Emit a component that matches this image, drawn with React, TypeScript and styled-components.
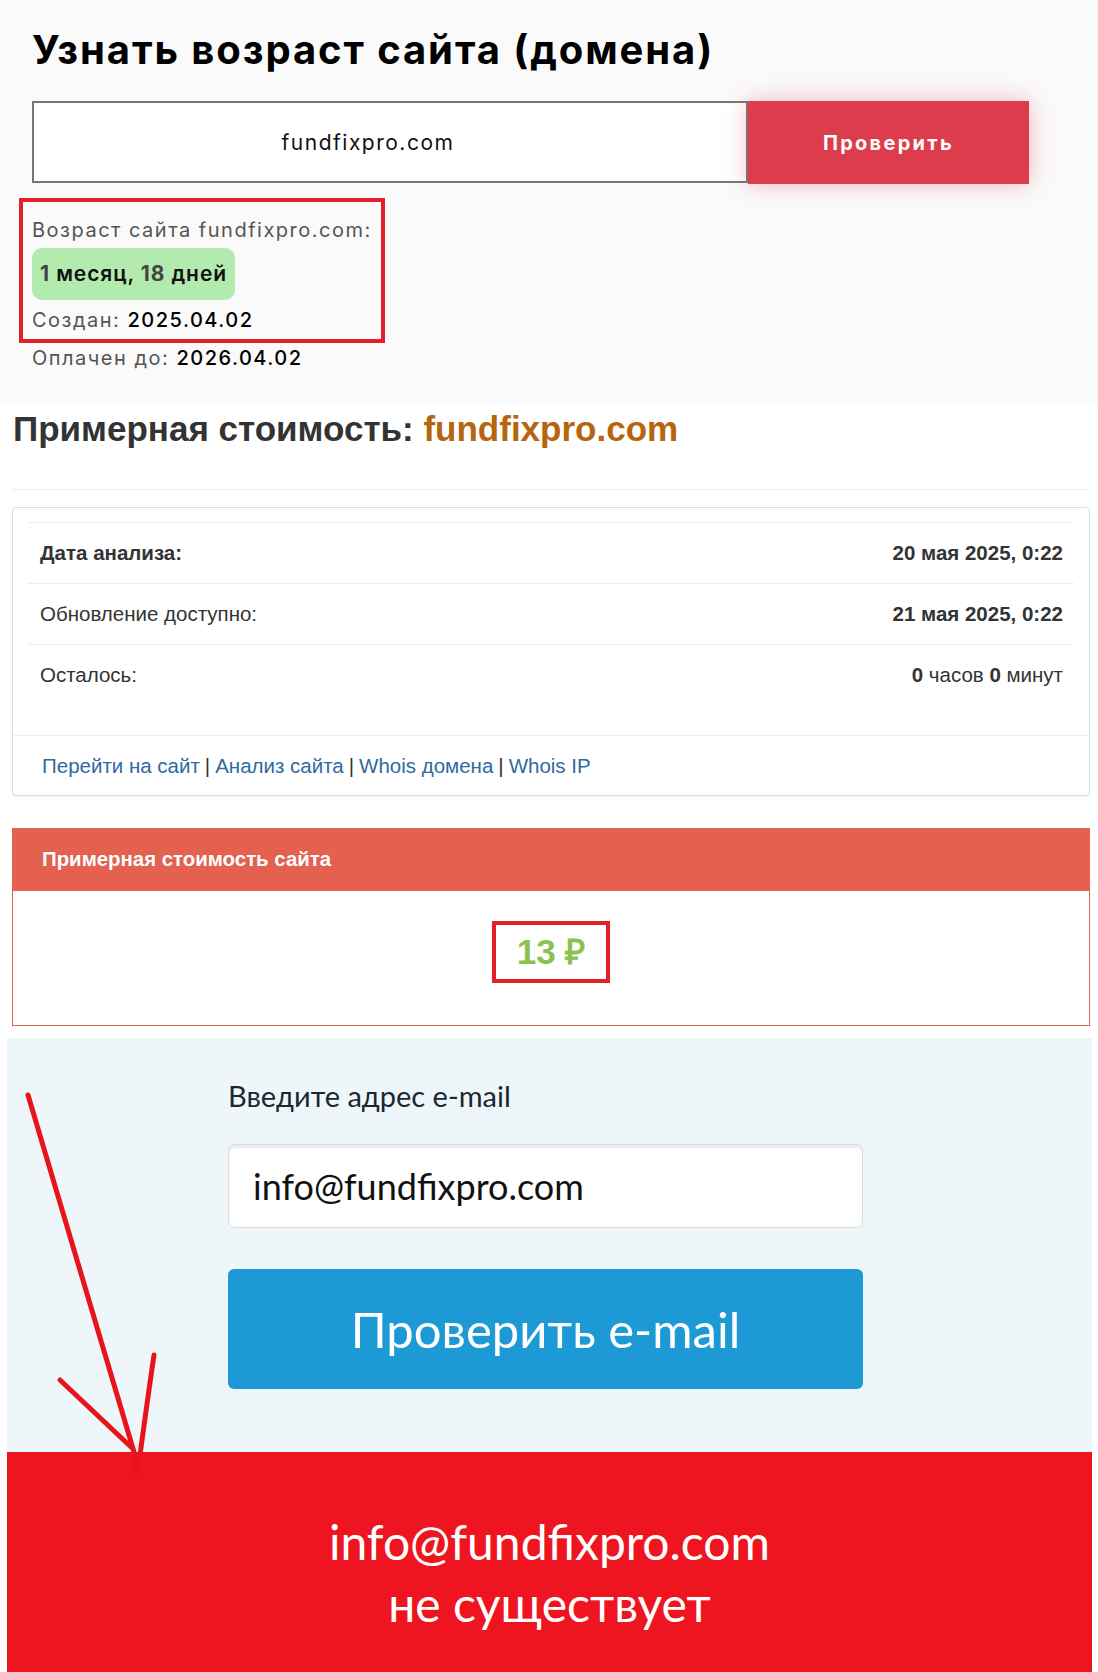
import React from "react";
import styled, { createGlobalStyle } from "styled-components";

const GlobalStyle = createGlobalStyle`
    body {
        margin: 0;
        background: #ffffff;
    }
    * {
        box-sizing: border-box;
    }
`;

const Page = styled.div`
    position: relative;
    width: 1098px;
    min-height: 1672px;
    overflow: hidden;
`;

/* --- age checker --- */

const AgeSection = styled.section`
    height: 404px;
    background: #fafafa;
    padding: 26px 32px 0;
    font-family: Inter, "Open Sans", sans-serif;
    display: flex;
    flex-direction: column;
    align-items: flex-start;
`;

const Title = styled.h1`
    margin: 0;
    font-size: 40px;
    line-height: 48px;
    font-weight: 700;
    letter-spacing: 1.9px;
    color: #000;
`;

const SearchForm = styled.form`
    display: flex;
    align-items: flex-start;
    margin-top: 27px;
`;

const DomainInput = styled.div`
    width: 716px;
    height: 82px;
    border: 2px solid #777;
    background: #fff;
    display: flex;
    align-items: center;
    justify-content: center;
    padding-right: 44px;
    font-size: 21px;
    letter-spacing: 1.5px;
    color: #111;
`;

const CheckButton = styled.button`
    width: 281px;
    height: 83px;
    border: 0;
    background: #dc3c4c;
    color: #fff;
    font-family: inherit;
    font-size: 20px;
    font-weight: 700;
    letter-spacing: 2.3px;
    box-shadow: 0 0 22px rgba(220, 60, 76, 0.35);
`;

const Marked = styled.div`
    margin: 14px 0 0 -13px;
    padding: 13px 9px 4px;
    border: 4px solid #e3202a;
`;

const InfoLine = styled.div<{ $gap?: number }>`
    font-size: 20px;
    line-height: 30px;
    letter-spacing: 1.5px;
    color: #555;
    margin-top: ${(p) => p.$gap || 0}px;

    b {
        font-weight: 500;
        color: #000;
    }
`;

const AgePill = styled.div`
    display: inline-block;
    margin-top: 3px;
    height: 52px;
    line-height: 52px;
    padding: 0 8px;
    border-radius: 10px;
    background: #b3eaae;
    font-size: 21px;
    font-weight: 600;
    letter-spacing: 0.9px;
    color: #111;

    b {
        font-weight: 700;
        color: #444;
    }
`;

/* --- price estimate --- */

const PriceSection = styled.section`
    padding: 6px 8px 0 12px;
    font-family: "Liberation Sans", Arial, sans-serif;
    color: #333;
`;

const PriceTitle = styled.h2`
    margin: 0 0 0 1px;
    font-size: 35px;
    line-height: 37px;
    font-weight: 700;
    color: #333;

    span {
        color: #b5650d;
    }
`;

const Rule = styled.hr`
    margin: 42px 0 17px;
    border: 0;
    border-top: 1px solid #eee;
`;

const Card = styled.div`
    border: 1px solid #ddd;
    border-radius: 4px;
    box-shadow: 0 1px 2px rgba(0, 0, 0, 0.06);
    background: #fff;
`;

const CardBody = styled.div`
    padding: 14px 15px 30px 15px;
`;

const Row = styled.div`
    display: flex;
    justify-content: space-between;
    align-items: center;
    height: 61px;
    padding: 0 11px 0 12px;
    border-top: 1px solid #eee;
    font-size: 20.5px;
    color: #333;
`;

const CardFooter = styled.div`
    height: 60px;
    display: flex;
    align-items: center;
    padding: 0 29px;
    border-top: 1px solid #eee;
    font-size: 20.5px;
    color: #333;
`;

const Link = styled.a`
    color: #2f6aa0;
    text-decoration: none;
`;

const Pipe = styled.span`
    margin: 0 5px;
`;

const Panel = styled.div`
    margin-top: 32px;
    border: 1px solid #e4604f;
    border-top: 0;
`;

const PanelHead = styled.div`
    height: 63px;
    display: flex;
    align-items: center;
    padding: 0 29px;
    background: #e4604f;
    color: #fff;
    font-size: 20.4px;
    font-weight: 700;
`;

const PanelBody = styled.div`
    height: 134px;
    display: flex;
    justify-content: center;
    align-items: flex-start;
    padding-top: 30px;
`;

const PriceBox = styled.div`
    border: 4px solid #e3202a;
    padding: 0 21px;
    line-height: 54px;
    font-size: 35px;
    font-weight: 700;
    color: #8cc152;
`;

/* --- email checker --- */

const MailSection = styled.section`
    margin: 12px 6px 0 7px;
    height: 414px;
    padding: 41px 0 0 221px;
    background: #eef6fa;
    font-family: Lato, "Open Sans", sans-serif;
`;

const MailLabel = styled.div`
    font-size: 29px;
    line-height: 34px;
    color: #1b2733;
`;

const MailInput = styled.div`
    margin-top: 31px;
    width: 635px;
    height: 84px;
    display: flex;
    align-items: center;
    padding-left: 24px;
    border: 1px solid #dcdcdc;
    border-radius: 6px;
    background: #fff;
    box-shadow: inset 0 3px 2px rgba(0, 0, 0, 0.08);
    font-size: 36px;
    color: #111;
`;

const MailButton = styled.button`
    display: block;
    margin-top: 41px;
    width: 635px;
    height: 120px;
    border: 0;
    border-radius: 6px;
    background: #1d9ad6;
    color: #fff;
    font-family: inherit;
    font-size: 49px;
`;

const Verdict = styled.section`
    margin: 0 6px 0 7px;
    height: 221px;
    padding-top: 59px;
    background: #ef1520;
    color: #fff;
    text-align: center;
    font-family: Lato, "Open Sans", sans-serif;
    font-size: 48px;
    line-height: 62px;
`;

const ArrowLayer = styled.svg`
    position: absolute;
    left: 0;
    top: 0;
    pointer-events: none;
`;

const Arrow = () => (
    <ArrowLayer width="1098" height="1672" viewBox="0 0 1098 1672">
        <g
            fill="none"
            stroke="#e8141c"
            strokeWidth="5"
            strokeLinecap="round"
            strokeLinejoin="round"
        >
            <path d="M28 1095 L134 1452 L137 1475" />
            <path d="M60 1380 L131 1447" />
            <path d="M154 1355 Q 146 1410 138 1470" />
        </g>
    </ArrowLayer>
);

export default function App() {
    return (
        <Page>
            <GlobalStyle />
            <AgeSection>
                <Title>Узнать возраст сайта (домена)</Title>
                <SearchForm onSubmit={(e) => e.preventDefault()}>
                    <DomainInput>fundfixpro.com</DomainInput>
                    <CheckButton type="submit">Проверить</CheckButton>
                </SearchForm>
                <Marked>
                    <InfoLine>Возраст сайта fundfixpro.com:</InfoLine>
                    <AgePill>
                        <b>1</b> месяц, <b>18</b> дней
                    </AgePill>
                    <InfoLine $gap={5}>
                        Создан: <b>2025.04.02</b>
                    </InfoLine>
                </Marked>
                <InfoLine>
                    Оплачен до: <b>2026.04.02</b>
                </InfoLine>
            </AgeSection>

            <PriceSection>
                <PriceTitle>
                    Примерная стоимость: <span>fundfixpro.com</span>
                </PriceTitle>
                <Rule />
                <Card>
                    <CardBody>
                        <Row>
                            <b>Дата анализа:</b>
                            <b>20 мая 2025, 0:22</b>
                        </Row>
                        <Row>
                            <span>Обновление доступно:</span>
                            <b>21 мая 2025, 0:22</b>
                        </Row>
                        <Row>
                            <span>Осталось:</span>
                            <span>
                                <b>0</b> часов <b>0</b> минут
                            </span>
                        </Row>
                    </CardBody>
                    <CardFooter>
                        <Link href="#">Перейти на сайт</Link>
                        <Pipe>|</Pipe>
                        <Link href="#">Анализ сайта</Link>
                        <Pipe>|</Pipe>
                        <Link href="#">Whois домена</Link>
                        <Pipe>|</Pipe>
                        <Link href="#">Whois IP</Link>
                    </CardFooter>
                </Card>
                <Panel>
                    <PanelHead>Примерная стоимость сайта</PanelHead>
                    <PanelBody>
                        <PriceBox>13 ₽</PriceBox>
                    </PanelBody>
                </Panel>
            </PriceSection>

            <MailSection>
                <MailLabel>Введите адрес e-mail</MailLabel>
                <MailInput>info@fundfixpro.com</MailInput>
                <MailButton type="button">Проверить e-mail</MailButton>
            </MailSection>

            <Verdict>
                info@fundfixpro.com
                <br />
                не существует
            </Verdict>

            <Arrow />
        </Page>
    );
}
